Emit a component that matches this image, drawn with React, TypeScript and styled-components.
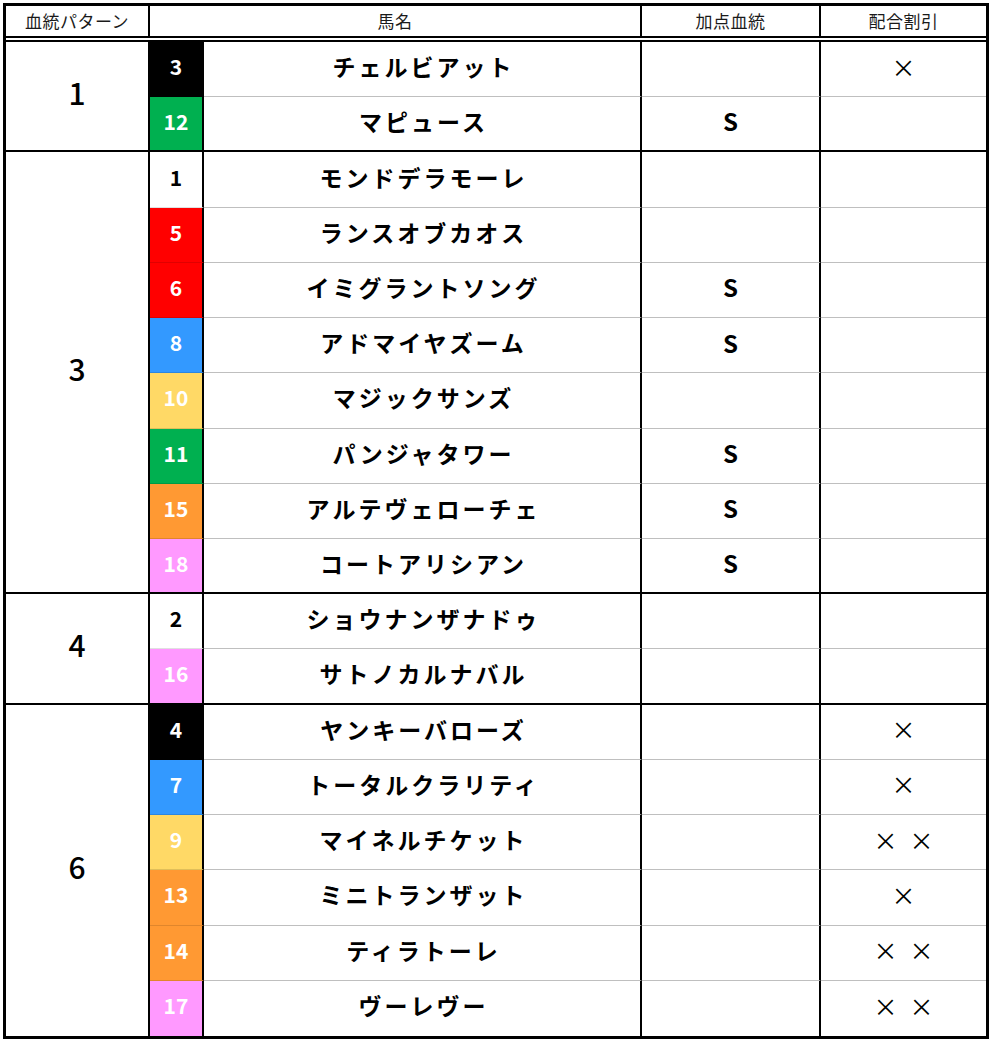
import React from "react";
import styled, { createGlobalStyle, css } from "styled-components";

const Global = createGlobalStyle`
  html, body { margin: 0; padding: 0; background: #fff; }
  body { font-family: "Noto Sans CJK JP", "Noto Sans", sans-serif; color: #000; }
  * { box-sizing: border-box; }
`;

type Edge = "gray" | "black" | "none";

const edgeCss = (e: Edge) =>
  e === "black"
    ? css`border-bottom: 2px solid #000;`
    : e === "gray"
    ? css`border-bottom: 1px solid #bfbfbf;`
    : css`border-bottom: none;`;

const Sheet = styled.div`
  margin: 3px;
  width: 986px;
  border: 3px solid #000;
`;

const Header = styled.div`
  display: grid;
  grid-template-columns: 144px 492px 179px 165px;
  height: 36px;
  border-bottom: 6px double #000;
`;

const HeaderCell = styled.div<{ $last?: boolean }>`
  display: flex;
  align-items: center;
  justify-content: center;
  font-size: 17px;
  letter-spacing: 0.5px;
  padding-bottom: 2px;
  color: #1a1a1a;
  border-right: ${(p) => (p.$last ? "none" : "2px solid #000")};
`;

const Body = styled.div`
  display: grid;
  grid-template-columns: 144px 54px 438px 179px 165px;
  grid-template-rows: repeat(18, 1fr);
  height: 994px;
`;

const PatternCell = styled.div<{ $span: number; $edge: Edge }>`
  grid-column: 1;
  grid-row: span ${(p) => p.$span};
  display: flex;
  align-items: center;
  justify-content: center;
  font-size: 30px;
  font-weight: 500;
  padding-bottom: 8px;
  border-right: 2px solid #000;
  ${(p) => edgeCss(p.$edge)}
`;

const NumCell = styled.div<{ $bg: string; $fg: string; $edge: Edge }>`
  display: flex;
  align-items: center;
  justify-content: center;
  background: ${(p) => p.$bg};
  color: ${(p) => p.$fg};
  font-size: 21px;
  font-weight: 700;
  padding-bottom: 6px;
  border-right: 2px solid #000;
  ${(p) =>
    p.$edge === "black"
      ? css`border-bottom: 2px solid #000;`
      : p.$edge === "gray"
      ? css`border-bottom: 1px solid rgba(0, 0, 0, 0.12);`
      : css`border-bottom: none;`}
`;

const NameCell = styled.div<{ $edge: Edge }>`
  display: flex;
  align-items: center;
  justify-content: center;
  font-size: 23px;
  font-weight: 700;
  letter-spacing: 3px;
  padding-left: 3px;
  padding-bottom: 6px;
  border-right: 2px solid #000;
  ${(p) => edgeCss(p.$edge)}
`;

const MarkCell = styled.div<{ $edge: Edge; $last?: boolean; $kind: "s" | "x" }>`
  display: flex;
  align-items: center;
  justify-content: center;
  font-size: 24px;
  font-weight: ${(p) => (p.$kind === "s" ? 700 : 400)};
  white-space: pre;
  padding-bottom: 6px;
  border-right: ${(p) => (p.$last ? "none" : "2px solid #000")};
  ${(p) => edgeCss(p.$edge)}
`;

const COLORS: Record<string, [string, string]> = {
  black: ["#000000", "#ffffff"],
  green: ["#00b050", "#ffffff"],
  white: ["#ffffff", "#000000"],
  red: ["#ff0000", "#ffffff"],
  blue: ["#3399ff", "#ffffff"],
  yellow: ["#ffd966", "#ffffff"],
  orange: ["#ff9933", "#ffffff"],
  pink: ["#ff99ff", "#ffffff"],
};

type Horse = { no: number; color: string; name: string; bonus?: string; discount?: string };
type Group = { pattern: string; horses: Horse[] };

const XX = "×\u2002×";

const groups: Group[] = [
  {
    pattern: "1",
    horses: [
      { no: 3, color: "black", name: "チェルビアット", discount: "×" },
      { no: 12, color: "green", name: "マピュース", bonus: "S" },
    ],
  },
  {
    pattern: "3",
    horses: [
      { no: 1, color: "white", name: "モンドデラモーレ" },
      { no: 5, color: "red", name: "ランスオブカオス" },
      { no: 6, color: "red", name: "イミグラントソング", bonus: "S" },
      { no: 8, color: "blue", name: "アドマイヤズーム", bonus: "S" },
      { no: 10, color: "yellow", name: "マジックサンズ" },
      { no: 11, color: "green", name: "パンジャタワー", bonus: "S" },
      { no: 15, color: "orange", name: "アルテヴェローチェ", bonus: "S" },
      { no: 18, color: "pink", name: "コートアリシアン", bonus: "S" },
    ],
  },
  {
    pattern: "4",
    horses: [
      { no: 2, color: "white", name: "ショウナンザナドゥ" },
      { no: 16, color: "pink", name: "サトノカルナバル" },
    ],
  },
  {
    pattern: "6",
    horses: [
      { no: 4, color: "black", name: "ヤンキーバローズ", discount: "×" },
      { no: 7, color: "blue", name: "トータルクラリティ", discount: "×" },
      { no: 9, color: "yellow", name: "マイネルチケット", discount: XX },
      { no: 13, color: "orange", name: "ミニトランザット", discount: "×" },
      { no: 14, color: "orange", name: "ティラトーレ", discount: XX },
      { no: 17, color: "pink", name: "ヴーレヴー", discount: XX },
    ],
  },
];

export default function App() {
  return (
    <>
      <Global />
      <Sheet>
        <Header>
          <HeaderCell>血統パターン</HeaderCell>
          <HeaderCell>馬名</HeaderCell>
          <HeaderCell>加点血統</HeaderCell>
          <HeaderCell $last>配合割引</HeaderCell>
        </Header>
        <Body>
          {groups.map((g, gi) => {
            const lastGroup = gi === groups.length - 1;
            const groupEdge: Edge = lastGroup ? "none" : "black";
            return (
              <React.Fragment key={g.pattern}>
                <PatternCell $span={g.horses.length} $edge={groupEdge}>
                  {g.pattern}
                </PatternCell>
                {g.horses.map((h, hi) => {
                  const lastRow = hi === g.horses.length - 1;
                  const edge: Edge = lastRow ? groupEdge : "gray";
                  const [bg, fg] = COLORS[h.color];
                  return (
                    <React.Fragment key={h.no}>
                      <NumCell $bg={bg} $fg={fg} $edge={edge}>
                        {h.no}
                      </NumCell>
                      <NameCell $edge={edge}>{h.name}</NameCell>
                      <MarkCell $edge={edge} $kind="s">
                        {h.bonus ?? ""}
                      </MarkCell>
                      <MarkCell $edge={edge} $kind="x" $last>
                        {h.discount ?? ""}
                      </MarkCell>
                    </React.Fragment>
                  );
                })}
              </React.Fragment>
            );
          })}
        </Body>
      </Sheet>
    </>
  );
}
